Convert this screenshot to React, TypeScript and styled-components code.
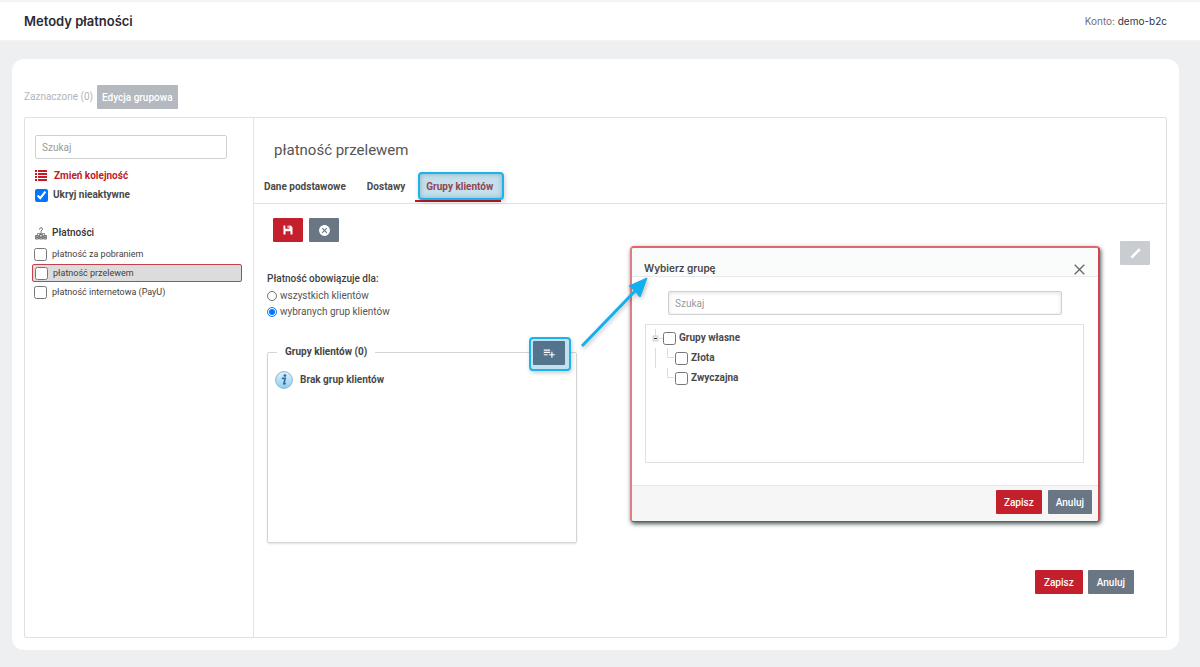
import React from "react";
import styled, { createGlobalStyle, css } from "styled-components";
import { MdCancel, MdPlaylistAdd } from "react-icons/md";

const GlobalStyle = createGlobalStyle`
  * { box-sizing: border-box; }
  body {
    margin: 0;
    background: #eeeff1;
    color: #4a4a4a;
    font: 400 10px/16px Roboto, sans-serif;
  }
  button, input { font-family: inherit; font-size: 10px; }
`;

const TopBar = styled.header`
  display: flex;
  align-items: center;
  justify-content: space-between;
  height: 41px;
  padding: 0 33px 0 24px;
  background: #fff;
  border-top: 2px solid #f3f5f4;
  border-bottom: 1px solid #f3f3f4;
  font-family: Inter, sans-serif;
`;

const PageTitle = styled.h1`
  margin: 0;
  font-size: 13px;
  line-height: 20px;
  font-weight: 600;
  color: #2a2a34;
`;

const Account = styled.div`
  font-size: 10px;
  line-height: 20px;
  color: #73737b;
  span { color: #33333b; }
`;

const Card = styled.main`
  margin: 18px 21px 17px 12px;
  padding: 26px 12px 12px;
  background: #fff;
  border-radius: 12px;
`;

const Toolbar = styled.div`
  display: flex;
  align-items: center;
  gap: 4px;
  margin-bottom: 8px;
  color: #b4b6b9;
`;

const Button = styled.button<{ $tone?: "red" | "slate" | "muted" | "pale"; $icon?: boolean }>`
  display: inline-flex;
  align-items: center;
  justify-content: center;
  height: 24px;
  padding: 0 ${(p) => (p.$icon ? 0 : 9)}px;
  ${(p) => p.$icon && css`width: 30px;`}
  border: 0;
  border-radius: 1px;
  color: #fff;
  font-weight: 500;
  background: ${(p) =>
    ({ red: "#c4202b", slate: "#6b7684", muted: "#b4b9c0", pale: "#c9cdd2" })[p.$tone || "slate"]};
`;

const GroupEdit = styled(Button)`
  padding: 0 5px;
`;

const Panel = styled.div`
  display: flex;
  border: 1px solid #e0e1e2;
  border-radius: 2px;
`;

const Sidebar = styled.aside`
  flex: 0 0 229px;
  padding: 17px 11px 0 10px;
  border-right: 1px solid #e2e3e4;
`;

const SearchInput = styled.input`
  display: block;
  width: 100%;
  height: 24px;
  padding: 0 6px;
  border: 1px solid #cfd0d2;
  border-radius: 2px;
  background: #fff;
  color: #444;
  &::placeholder { color: #9a9a9a; opacity: 1; }
`;

const SidebarSearch = styled(SearchInput)`
  width: 192px;
`;

const OrderLink = styled.a`
  display: flex;
  align-items: center;
  gap: 7px;
  height: 18px;
  margin-top: 8px;
  color: #c11b26;
  font-weight: 700;
  text-decoration: none;
`;

const CheckBox = styled.input.attrs({ type: "checkbox" })`
  flex: none;
  width: 13px;
  height: 13px;
  margin: 0;
  accent-color: #0075ff;
`;

const ToggleRow = styled.label`
  display: flex;
  align-items: center;
  gap: 5px;
  height: 20px;
  font-weight: 700;
  color: #4a4a4a;
`;

const SectionTitle = styled.h2`
  display: flex;
  align-items: center;
  gap: 5px;
  height: 18px;
  margin: 19px 0 3px;
  font-size: 10px;
  font-weight: 500;
  color: #333;
`;

const MethodList = styled.div`
  display: flex;
  flex-direction: column;
  gap: 1px;
  margin: 0 0 0 -3px;
`;

const Method = styled.label<{ $selected?: boolean }>`
  display: flex;
  align-items: center;
  gap: 5px;
  height: 18px;
  padding-left: ${(p) => (p.$selected ? 2 : 1)}px;
  border: 1px solid ${(p) => (p.$selected ? "#c4404c" : "transparent")};
  border-radius: 2px;
  background: ${(p) => (p.$selected ? "#dcdcdc" : "none")};
  font-size: 9px;
  color: #3f3f3f;
`;

const Detail = styled.section`
  position: relative;
  flex: 1;
  min-width: 0;
`;

const DetailTitle = styled.h2`
  margin: 0;
  padding: 22px 0 0 20px;
  font-size: 15px;
  line-height: 20px;
  font-weight: 400;
  color: #555;
`;

const Tabs = styled.nav`
  display: flex;
  gap: 21px;
  padding: 12px 0 0 10px;
  border-bottom: 1px solid #e0e1e2;
`;

const Tab = styled.button<{ $active?: boolean }>`
  position: relative;
  height: 31px;
  padding: 0 0 3px;
  border: 0;
  background: none;
  font-weight: 700;
  color: ${(p) => (p.$active ? "#94454f" : "#4a4a4a")};
  ${(p) =>
    p.$active &&
    css`
      z-index: 0;
      &::before {
        content: "";
        position: absolute;
        z-index: -1;
        inset: 0 -11px 3px -8px;
        border: 2px solid #19b3ee;
        border-radius: 4px;
        background: #c3e0ec;
        box-shadow: inset 0 0 5px rgba(70, 110, 125, 0.45), 1px 2px 5px rgba(0, 0, 0, 0.2);
      }
      &::after {
        content: "";
        position: absolute;
        z-index: -2;
        left: -11px;
        right: -8px;
        bottom: 1px;
        height: 2px;
        background: #c11b26;
      }
    `}
`;

const Content = styled.div`
  display: flex;
  justify-content: space-between;
  align-items: flex-start;
  padding: 14px 16px 0 13px;
`;

const Settings = styled.div`
  width: 310px;
`;

const Actions = styled.div`
  display: flex;
  gap: 6px;
  padding-left: 6px;
`;

const EditSlot = styled.div`
  padding-top: 23px;
`;

const ScopeGroup = styled.div`
  margin-top: 29px;
`;

const ScopeTitle = styled.div`
  margin-bottom: 1px;
  font-weight: 500;
  color: #3f3f3f;
`;

const RadioRow = styled.label`
  display: flex;
  align-items: center;
  gap: 3px;
  height: 16px;
  color: #555;
  input {
    width: 10px;
    height: 10px;
    margin: 0;
    accent-color: #0075ff;
  }
`;

const GroupBox = styled.fieldset`
  position: relative;
  min-width: 0;
  min-height: 199px;
  margin: 24px 0 0;
  padding: 11px 7px;
  border: 1px solid #d4d5d6;
  border-radius: 2px;
  box-shadow: 0 1px 2px rgba(0, 0, 0, 0.12);
  legend {
    margin-left: 2px;
    padding: 0 8px;
    background: #fff;
    font-weight: 700;
    color: #444;
  }
`;

const AddHighlight = styled.div`
  position: absolute;
  top: -23px;
  right: 5px;
  padding: 2px 4px 4px 2px;
  border: 2px solid #19b3ee;
  border-radius: 4px;
  background: #c3e0ec;
  box-shadow: 1px 2px 4px rgba(0, 0, 0, 0.2);
  line-height: 0;
`;

const AddButton = styled(Button)`
  width: 32px;
  background: #54738c;
`;

const EmptyNote = styled.div`
  display: flex;
  align-items: center;
  gap: 7px;
  font-weight: 700;
  color: #4a4a4a;
`;

const FormFooter = styled.div`
  display: flex;
  justify-content: flex-end;
  gap: 5px;
  padding: 27px 32px 43px 0;
`;

const Dialog = styled.div`
  position: absolute;
  left: 376px;
  top: 128px;
  width: 470px;
  border: 2px solid;
  border-bottom-width: 1px;
  border-color: #e0686f #d9404b #c9303c #dd7f85;
  border-radius: 4px;
  background: #fff;
  box-shadow: 1px 2px 4px rgba(30, 50, 50, 0.8);
`;

const DialogHeader = styled.div`
  display: flex;
  align-items: flex-end;
  justify-content: space-between;
  height: 29px;
  padding: 0 13px 0 12px;
  border-bottom: 1px solid #e8e9e9;
  border-radius: 2px 2px 0 0;
  background: #fafcfb;
`;

const DialogTitle = styled.h3`
  margin: 0;
  font: 600 10px/16px Inter, sans-serif;
  color: #444;
`;

const CloseButton = styled.button`
  display: flex;
  padding: 0;
  border: 0;
  background: none;
`;

const DialogBody = styled.div`
  padding: 14px 14px 22px 13px;
`;

const DialogSearch = styled.div`
  padding: 0 22px 9px 23px;
  input { box-shadow: inset 0 1px 4px rgba(0, 0, 0, 0.12); }
`;

const Tree = styled.div`
  min-height: 139px;
  padding: 3px 0 0 6px;
  border: 1px solid #e0e0e0;
`;

const TreeRow = styled.label`
  display: flex;
  align-items: center;
  height: 20px;
  font-weight: 700;
  color: #4a4a4a;
  input { margin-right: 3px; }
`;

const DialogFooter = styled.div`
  display: flex;
  justify-content: flex-end;
  gap: 6px;
  padding: 4px 6px 7px;
  border-top: 1px solid #e8e8e8;
  border-radius: 0 0 2px 2px;
  background: #f6f6f6;
  button { padding: 0 8px; }
`;

const Arrow = styled.svg`
  position: absolute;
  left: 322px;
  top: 152px;
  pointer-events: none;
  filter: drop-shadow(1px 2px 2px rgba(0, 0, 0, 0.25));
`;

const ListIcon = () => (
  <svg width="12" height="12" viewBox="0 0 12 12" fill="#c11b26" aria-hidden="true">
    <path d="M0 0h2v2H0zM3 0h9v2H3zM0 3h2v2H0zM3 3h9v2H3zM0 6h2v2H0zM3 6h9v2H3zM0 9h2v2H0zM3 9h9v2H3z" />
  </svg>
);

const PaymentsIcon = () => (
  <svg width="12" height="13" viewBox="0 0 12 13" fill="none" stroke="#777" aria-hidden="true">
    <path d="M4.500 2.500q0-1.800 1.500-1.800t1.500 1.400q0 1-1.500 1.800v1" />
    <path d="M6 5v2M2.500 8V6.500h7V8" strokeWidth=".8" />
    <path d="M.5 8.500h3v1.500h-3zM4.500 7.500h3V10h-3zM8.500 8.500h3v1.500h-3zM.5 10.500h3v1.500h-3zM4.500 10.500h3v1.500h-3zM8.500 10.500h3v1.500h-3z" fill="#ccc" />
  </svg>
);

const SaveIcon = () => (
  <svg width="10" height="10" viewBox="0 0 10 10" aria-hidden="true">
    <path fill="#fff" fillRule="evenodd" d="M.5.500h1.800v3.300h4V.5h1.400L9.500 2.300v7.200h-2V6.300h-5v3.200h-2zM4.600.5h1v2.400h-1z" />
  </svg>
);

const PencilIcon = () => (
  <svg width="11" height="11" viewBox="0 0 11 11" fill="none" stroke="#fff" strokeWidth="2.600" aria-hidden="true">
    <path d="M1.400 9.600 7.300 3.700" />
    <path d="M7.800 3.200 9 2" strokeLinecap="round" />
  </svg>
);

const InfoIcon = () => (
  <svg width="18" height="18" viewBox="0 0 18 18" aria-hidden="true">
    <defs>
      <linearGradient id="info" x1="0" y1="0" x2="0" y2="1">
        <stop offset="0" stopColor="#e2f2fb" />
        <stop offset="1" stopColor="#8fccf0" />
      </linearGradient>
    </defs>
    <circle cx="9" cy="9" r="8.400" fill="url(#info)" stroke="#86b4d2" />
    <circle cx="9.900" cy="4.600" r="1.400" fill="#2f6fa8" />
    <path d="M6.800 7.400h3.400L8.800 12.800q.8.400 1.900-.6" fill="none" stroke="#2f6fa8" strokeWidth="1.700" />
  </svg>
);

const RootBranch = () => (
  <svg width="11" height="20" viewBox="0 0 11 20" fill="none" aria-hidden="true">
    <path d="M3.500 1v7M7 10.500h4" stroke="#ddd" />
    <rect x="1" y="8" width="5" height="5" fill="#f1eeea" stroke="#d8d4d0" />
    <path d="M2 10.500h3" stroke="#333" />
  </svg>
);

const ChildBranch = ({ trunk }: { trunk?: boolean }) => (
  <svg width="23" height="20" viewBox="0 0 23 20" fill="none" stroke="#ddd" aria-hidden="true">
    {trunk && <path d="M3.500 0v20" />}
    <path d="M15.500 0v9.500H22" />
  </svg>
);

const methods = [
  { name: "płatność za pobraniem" },
  { name: "płatność przelewem", selected: true },
  { name: "płatność internetowa (PayU)" },
];

export default function App() {
  return (
    <>
      <GlobalStyle />
      <TopBar>
        <PageTitle>Metody płatności</PageTitle>
        <Account>Konto: <span>demo-b2c</span></Account>
      </TopBar>
      <Card>
        <Toolbar>
          <span>Zaznaczone (0)</span>
          <GroupEdit $tone="muted">Edycja grupowa</GroupEdit>
        </Toolbar>
        <Panel>
          <Sidebar>
            <SidebarSearch type="text" placeholder="Szukaj" aria-label="Szukaj" />
            <OrderLink href="#"><ListIcon />Zmień kolejność</OrderLink>
            <ToggleRow><CheckBox defaultChecked />Ukryj nieaktywne</ToggleRow>
            <SectionTitle><PaymentsIcon />Płatności</SectionTitle>
            <MethodList>
              {methods.map((m) => (
                <Method key={m.name} $selected={m.selected}>
                  <CheckBox />{m.name}
                </Method>
              ))}
            </MethodList>
          </Sidebar>
          <Detail>
            <DetailTitle>płatność przelewem</DetailTitle>
            <Tabs>
              <Tab>Dane podstawowe</Tab>
              <Tab>Dostawy</Tab>
              <Tab $active>Grupy klientów</Tab>
            </Tabs>
            <Content>
              <Settings>
                <Actions>
                  <Button $tone="red" $icon aria-label="Zapisz"><SaveIcon /></Button>
                  <Button $icon aria-label="Anuluj"><MdCancel size={13} /></Button>
                </Actions>
                <ScopeGroup>
                  <ScopeTitle>Płatność obowiązuje dla:</ScopeTitle>
                  <RadioRow><input type="radio" name="scope" />wszystkich klientów</RadioRow>
                  <RadioRow><input type="radio" name="scope" defaultChecked />wybranych grup klientów</RadioRow>
                </ScopeGroup>
                <GroupBox>
                  <legend>Grupy klientów (0)</legend>
                  <AddHighlight>
                    <AddButton $icon aria-label="Dodaj grupę"><MdPlaylistAdd size={14} /></AddButton>
                  </AddHighlight>
                  <EmptyNote><InfoIcon />Brak grup klientów</EmptyNote>
                </GroupBox>
              </Settings>
              <EditSlot>
                <Button $tone="pale" $icon aria-label="Edytuj"><PencilIcon /></Button>
              </EditSlot>
            </Content>
            <FormFooter>
              <Button $tone="red">Zapisz</Button>
              <Button>Anuluj</Button>
            </FormFooter>

            <Dialog role="dialog" aria-label="Wybierz grupę">
              <DialogHeader>
                <DialogTitle>Wybierz grupę</DialogTitle>
                <CloseButton aria-label="Zamknij">
                  <svg width="11" height="12" viewBox="0 0 11 12" stroke="#666" strokeWidth="1.300" fill="none">
                    <path d="M.7.700l9.600 9.600M10.300.700.7 10.300" />
                  </svg>
                </CloseButton>
              </DialogHeader>
              <DialogBody>
                <DialogSearch>
                  <SearchInput type="text" placeholder="Szukaj" aria-label="Szukaj grupy" />
                </DialogSearch>
                <Tree>
                  <TreeRow><RootBranch /><CheckBox />Grupy własne</TreeRow>
                  <TreeRow><ChildBranch trunk /><CheckBox />Złota</TreeRow>
                  <TreeRow><ChildBranch /><CheckBox />Zwyczajna</TreeRow>
                </Tree>
              </DialogBody>
              <DialogFooter>
                <Button $tone="red">Zapisz</Button>
                <Button>Anuluj</Button>
              </DialogFooter>
            </Dialog>
            <Arrow width="80" height="84" viewBox="0 0 80 84" aria-hidden="true">
              <path d="M6 76 61 19" stroke="#12b0ee" strokeWidth="3" fill="none" />
              <path d="M71 8 53 16l6 5 5 6z" fill="#12b0ee" stroke="#12b0ee" strokeWidth="1" strokeLinejoin="round" />
            </Arrow>
          </Detail>
        </Panel>
      </Card>
    </>
  );
}
